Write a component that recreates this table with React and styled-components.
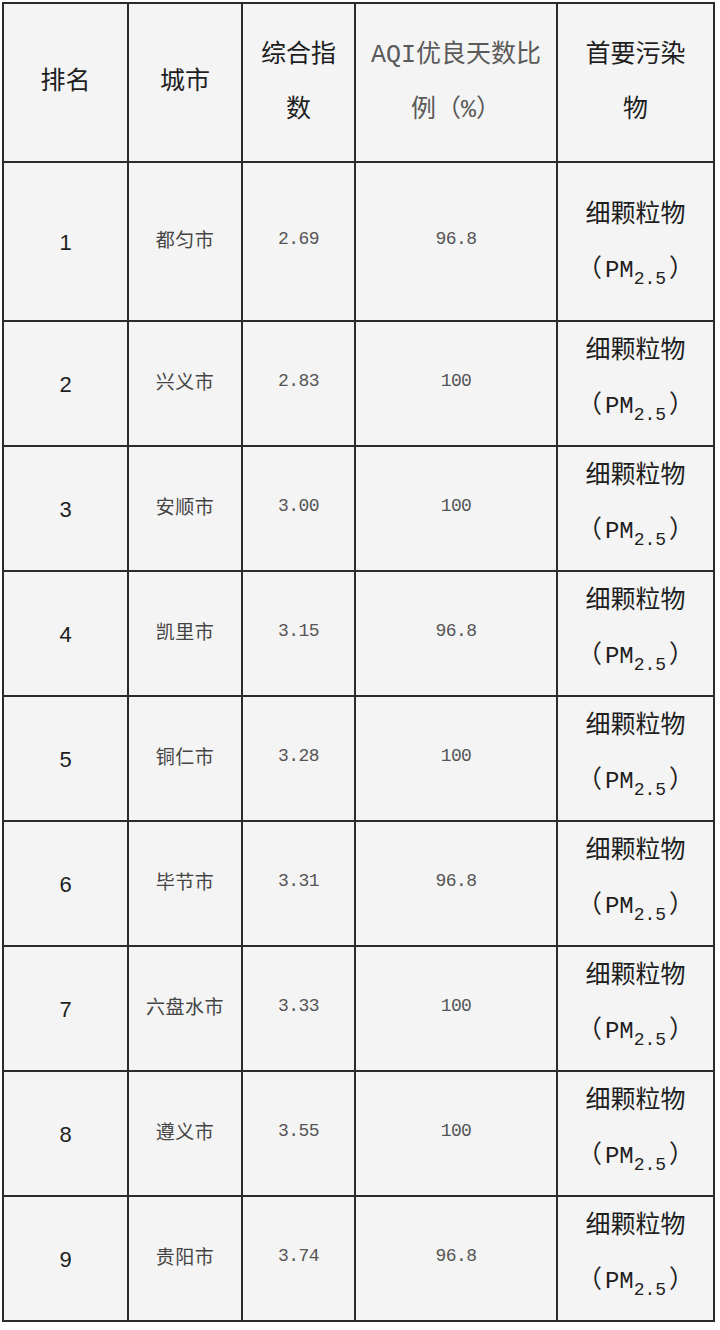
import React from "react";
import styled, { createGlobalStyle } from "styled-components";

const Global = createGlobalStyle`
  html, body { margin: 0; padding: 0; background: #ffffff; }
  body { font-family: "Noto Sans CJK SC", "Noto Sans", sans-serif; }
`;

const Table = styled.div`
  display: grid;
  grid-template-columns: 123px 112px 111px 200px 155px;
  grid-template-rows: 157px 157px repeat(8, 123px);
  gap: 2px;
  padding: 2px;
  margin: 2px 0 0 2px;
  width: fit-content;
  background: #2b2b2b;
`;

const Cell = styled.div`
  background: #f4f4f4;
  display: flex;
  align-items: center;
  justify-content: center;
  text-align: center;
  box-sizing: border-box;
  padding-bottom: ${(p) => p.$pb || 0}px;
`;

const HeadText = styled.div`
  font-family: "Liberation Mono", "Noto Sans CJK SC", monospace;
  font-size: 25px;
  line-height: 55px;
  color: ${(p) => (p.$muted ? "#5a5a5a" : "#1e1e1e")};
  width: ${(p) => p.$w || "auto"};
  word-break: break-all;
`;

const Rank = styled.span`
  font-family: "Liberation Sans", "Noto Sans", sans-serif;
  font-size: 22px;
  color: #1e1e1e;
  position: relative;
  top: 1px;
`;

const City = styled.span`
  font-family: "Noto Sans CJK SC", sans-serif;
  font-size: 19px;
  color: #444;
  letter-spacing: 0.5px;
`;

const Num = styled.span`
  font-family: "Liberation Mono", monospace;
  font-size: 18px;
  letter-spacing: -0.6px;
  color: #555;
`;

const Pollutant = styled.div`
  font-family: "Noto Sans CJK SC", sans-serif;
  font-size: 25px;
  line-height: 55px;
  color: #1e1e1e;
`;

const Paren = styled.span`
  display: inline-block;
  margin: 0 3px;
`;

const Mono = styled.span`
  font-family: "Liberation Mono", monospace;
  font-size: 24px;
`;

const Sub = styled.span`
  font-family: "Liberation Mono", monospace;
  font-size: 18px;
  position: relative;
  top: 7px;
`;

const rows = [
  ["1", "都匀市", "2.69", "96.8"],
  ["2", "兴义市", "2.83", "100"],
  ["3", "安顺市", "3.00", "100"],
  ["4", "凯里市", "3.15", "96.8"],
  ["5", "铜仁市", "3.28", "100"],
  ["6", "毕节市", "3.31", "96.8"],
  ["7", "六盘水市", "3.33", "100"],
  ["8", "遵义市", "3.55", "100"],
  ["9", "贵阳市", "3.74", "96.8"],
];

export default function App() {
  return (
    <>
      <Global />
      <Table>
        <Cell><HeadText>排名</HeadText></Cell>
        <Cell><HeadText>城市</HeadText></Cell>
        <Cell><HeadText $w="78px">综合指数</HeadText></Cell>
        <Cell><HeadText $muted $w="180px">AQI优良天数比例（%）</HeadText></Cell>
        <Cell><HeadText $w="104px">首要污染物</HeadText></Cell>
        {rows.map(([rank, city, idx, pct], i) => (
          <React.Fragment key={rank}>
            <Cell><Rank>{rank}</Rank></Cell>
            <Cell $pb={6}><City>{city}</City></Cell>
            <Cell $pb={6}><Num>{idx}</Num></Cell>
            <Cell $pb={6}><Num>{pct}</Num></Cell>
            <Cell $pb={i === 0 ? 0 : 12}>
              <Pollutant>
                细颗粒物
                <br />
                <Paren>（</Paren><Mono>PM</Mono><Sub>2.5</Sub><Paren>）</Paren>
              </Pollutant>
            </Cell>
          </React.Fragment>
        ))}
      </Table>
    </>
  );
}
